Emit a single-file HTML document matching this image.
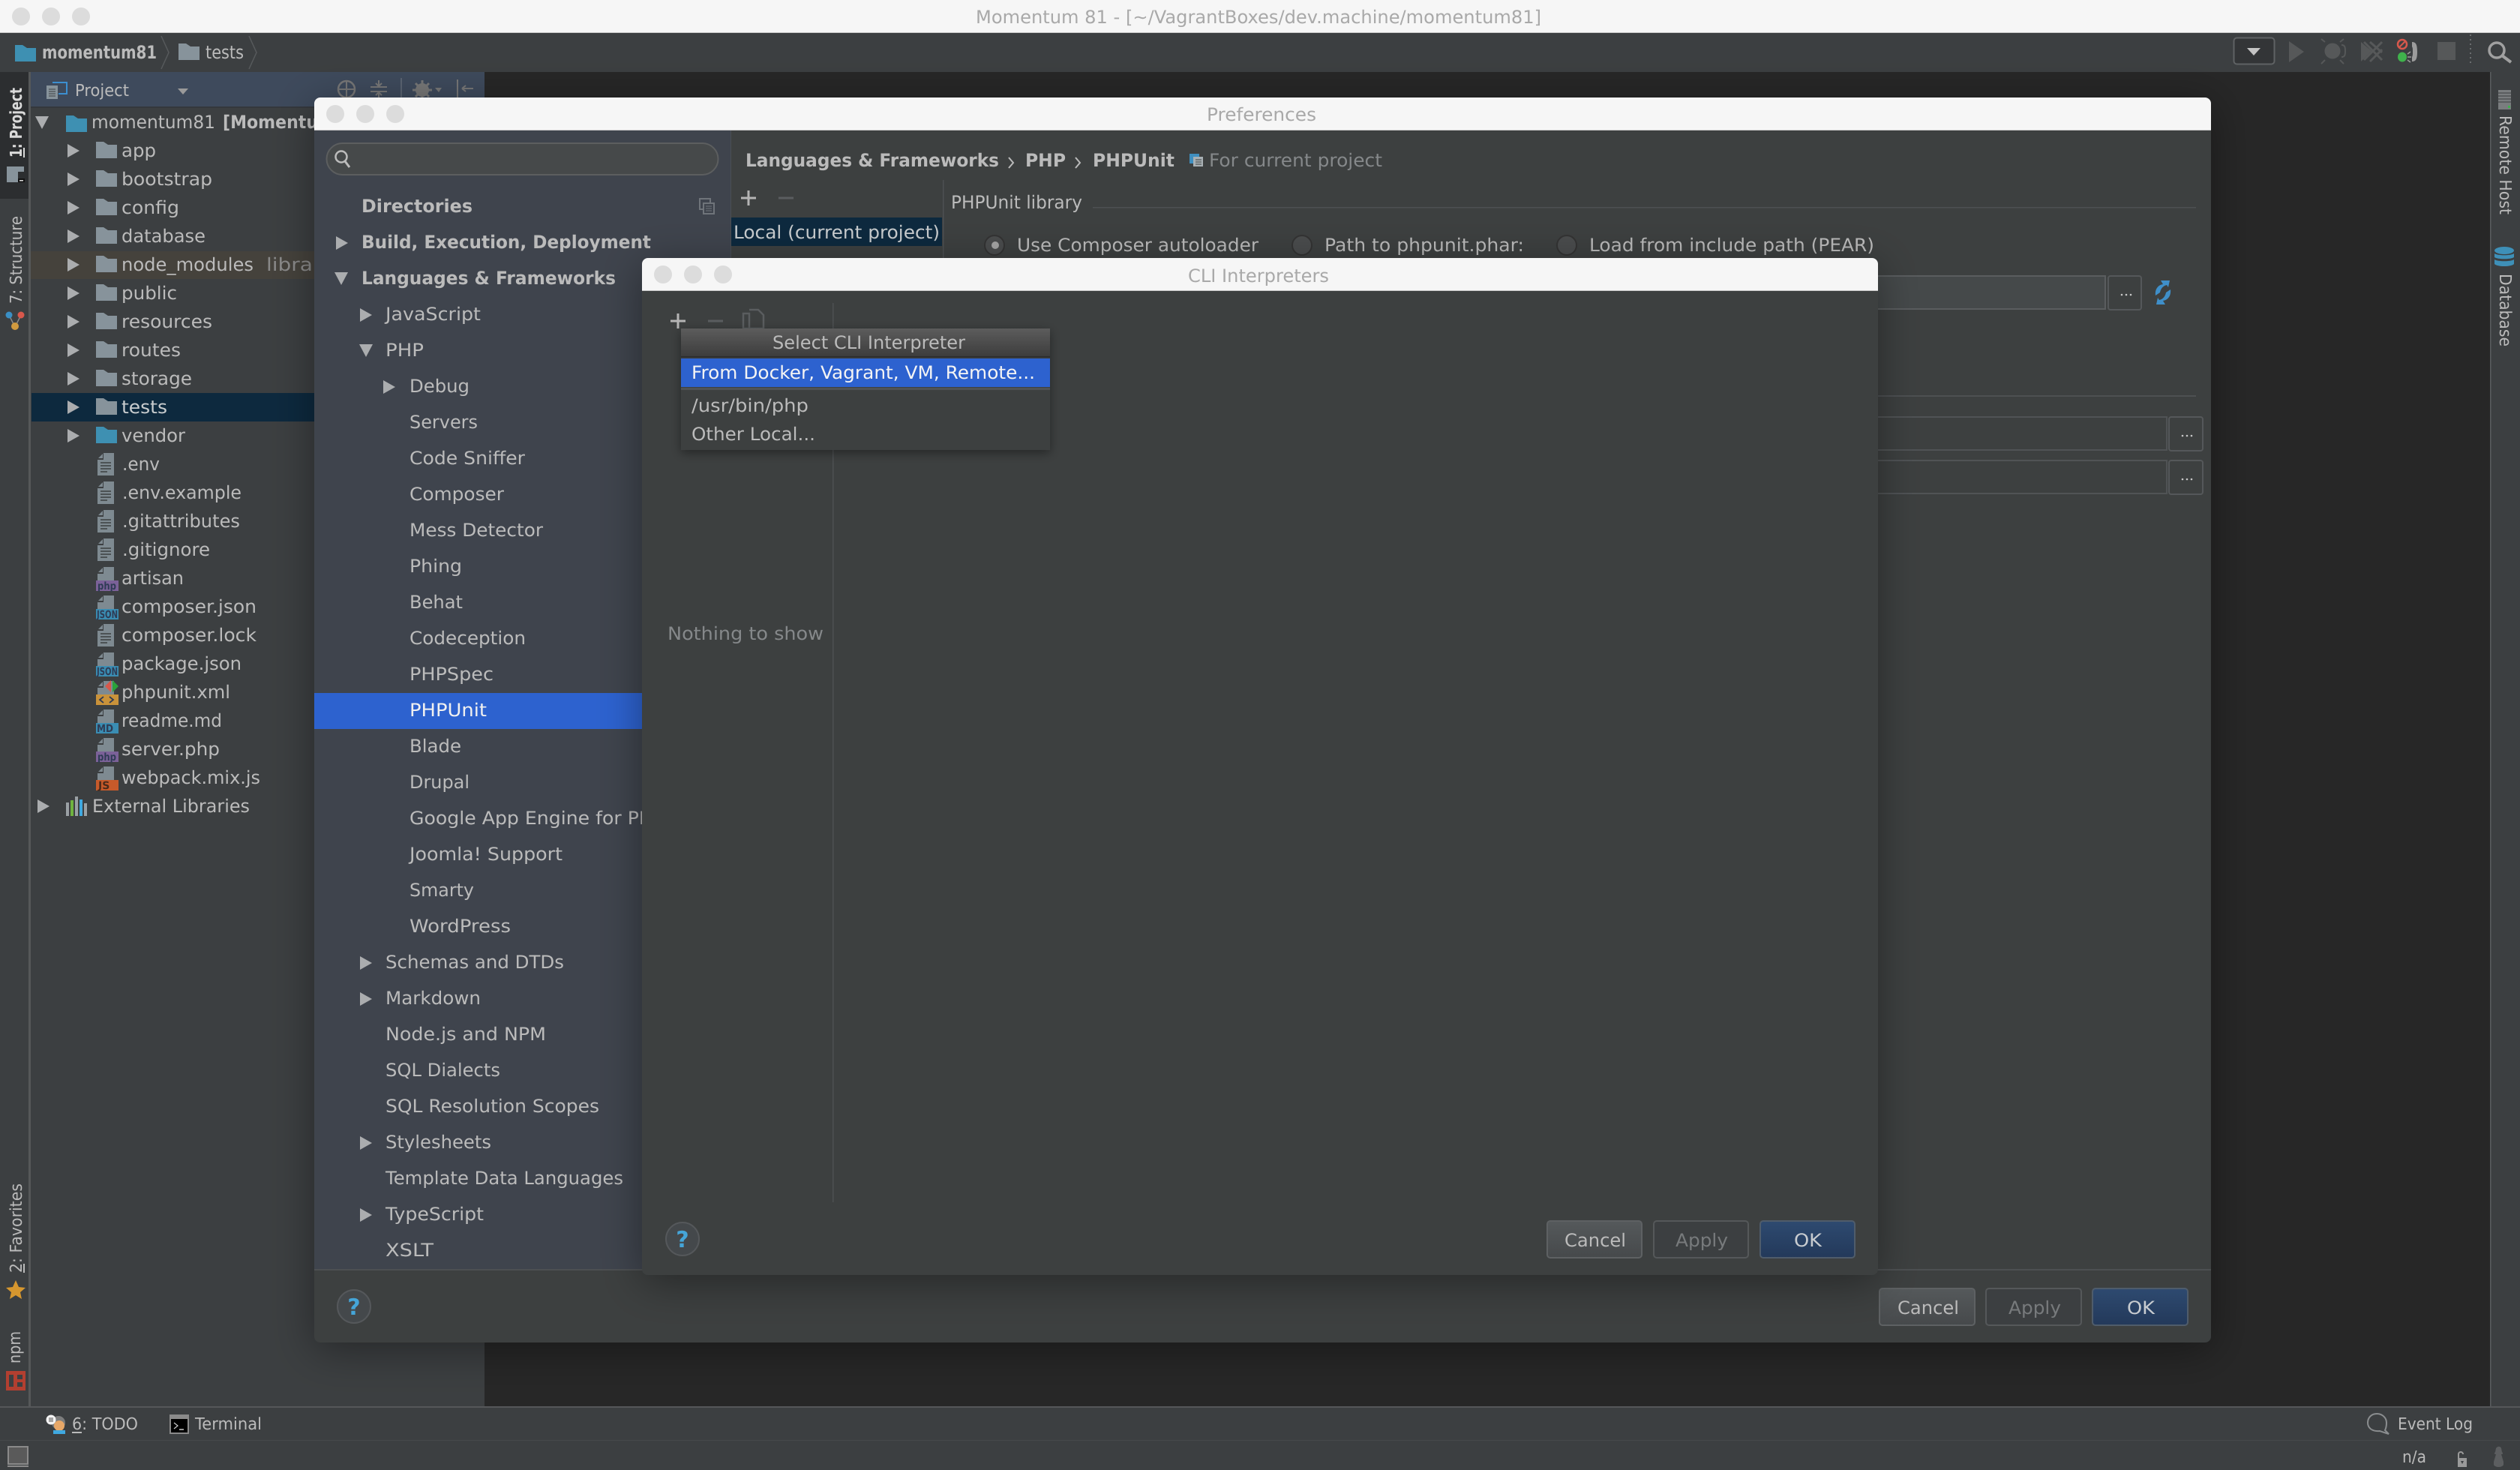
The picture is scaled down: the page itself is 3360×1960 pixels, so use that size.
<!DOCTYPE html>
<html lang="en"><head><meta charset="utf-8"><title>Momentum 81</title>
<style>
html,body{margin:0;padding:0;background:#272727;width:3360px;height:1960px;overflow:hidden}
svg{display:block}
text{font-family:"DejaVu Sans","Liberation Sans",sans-serif;font-size:24px;fill:#bbbbbb;text-rendering:geometricPrecision;white-space:pre}
.b{font-weight:bold}
.s{font-size:22px}
.bd{font-size:14px;fill:#2f3c55;font-weight:bold}
.tt{fill:#a9a9a9}
</style></head><body>
<svg xmlns="http://www.w3.org/2000/svg" width="3360" height="1960" viewBox="0 0 3360 1960">
<defs>
<filter id="sh" filterUnits="userSpaceOnUse" x="200" y="0" width="3160" height="1960"><feDropShadow dx="0" dy="10" stdDeviation="28" flood-color="#000" flood-opacity=".38"/></filter>
<filter id="sm" filterUnits="userSpaceOnUse" x="800" y="380" width="700" height="300"><feDropShadow dx="0" dy="4" stdDeviation="7" flood-color="#000" flood-opacity=".4"/></filter>
<linearGradient id="hd" x1="0" y1="0" x2="0" y2="1"><stop offset="0" stop-color="#5c5c5c"/><stop offset="1" stop-color="#3d3d3d"/></linearGradient>
<linearGradient id="cb" x1="0" y1="0" x2="0" y2="1"><stop offset="0" stop-color="#55595b"/><stop offset="1" stop-color="#46494b"/></linearGradient>
<linearGradient id="okb" x1="0" y1="0" x2="0" y2="1"><stop offset="0" stop-color="#2e4a70"/><stop offset="1" stop-color="#23395a"/></linearGradient>
<g id="fo"><path d="M0 0h10l6 4h12v18H0z" fill="#87939b"/></g>
<g id="fb"><path d="M0 0h10l6 4h12v18H0z" fill="#3e90b2"/></g>
<g id="fi"><path d="M8 0h14v30H0V9h8z" fill="#7e8a91"/><path d="M1 7l6-6v6z" fill="#7e8a91"/><path d="M4 13h14M4 17h14M4 21h14M4 25h9" stroke="#3c3f41" stroke-width="1.6"/></g>
<g id="ft"><path d="M8 0h14v18H0V9h8z" fill="#7e8a91"/><path d="M1 7l6-6v6z" fill="#7e8a91"/></g>
<polygon id="ar" points="0,0 16,9 0,18" fill="#abadaf"/>
<polygon id="ad" points="0,0 18,0 9,17" fill="#abadaf"/>
<g id="tl"><circle cx="0" cy="0" r="12" fill="#dcdcdc"/><circle cx="40" cy="0" r="12" fill="#dcdcdc"/><circle cx="80" cy="0" r="12" fill="#dcdcdc"/></g>
<g id="dots"><circle cx="-6" cy="0" r="1.3" fill="#c8c8c8"/><circle cx="0" cy="0" r="1.3" fill="#c8c8c8"/><circle cx="6" cy="0" r="1.3" fill="#c8c8c8"/></g>
</defs>

<!-- background -->
<rect width="3360" height="1960" fill="#272727"/>

<!-- window title bar -->
<rect width="3360" height="43" fill="#f6f6f6"/><rect y="43" width="3360" height="1" fill="#c8c8c8"/>
<use href="#tl" x="28" y="22"/>
<text class="tt" x="1301" y="31" textLength="754" lengthAdjust="spacingAndGlyphs">Momentum 81 - [~/VagrantBoxes/dev.machine/momentum81]</text>

<!-- navigation bar -->
<rect y="44" width="3360" height="52" fill="#3c3f41"/>
<use href="#fb" x="20" y="60"/>
<text class="b" x="56" y="78" textLength="153" lengthAdjust="spacingAndGlyphs">momentum81</text>
<path d="M215 48l10 22-10 22" fill="none" stroke="#575a5c" stroke-width="1.5"/>
<use href="#fo" x="238" y="58"/>
<text x="274" y="78" textLength="51" lengthAdjust="spacingAndGlyphs">tests</text>
<path d="M332 48l10 22-10 22" fill="none" stroke="#575a5c" stroke-width="1.5"/>
<!-- toolbar -->
<rect x="2978.500" y="50.500" width="54" height="35" rx="4" fill="#333537" stroke="#5f6264" stroke-width="2"/>
<polygon points="2996,64 3014,64 3005,74" fill="#c4c4c4"/>
<polygon points="3052,55 3072,69 3052,83" fill="#565859"/>
<g fill="#565859" stroke="#565859"><ellipse cx="3110" cy="68" rx="10" ry="10"/><path d="M3100 56l-5-4M3120 56l5-4M3122 60c4 0 5 2 5 8s-1 8-5 8M3100 80l-5 5M3120 80l5 5" fill="none" stroke-width="2"/></g>
<g><polygon points="3148,56 3162,68 3148,82" fill="#565859"/><path d="M3152 56l24 24M3160 56l16 14M3152 80l24-24M3160 82l16-16" stroke="#565859" stroke-width="3"/></g>
<circle cx="3203" cy="59" r="6" fill="none" stroke="#d8584c" stroke-width="2.500"/><path d="M3199 63l8-8" stroke="#d8584c" stroke-width="2"/>
<ellipse cx="3203" cy="76" rx="6" ry="6.500" fill="#3fb24c"/><path d="M3210 72l4-3M3210 76h5M3210 80l4 3" stroke="#9a9a9a" stroke-width="1.500"/>
<path d="M3216 56c5 0 7 3 7 13s-2 13-7 13v-6c1-2 1-3 1-7s0-5-1-7z" fill="#9c9c9c"/>
<rect x="3250" y="56" width="24" height="24" fill="#565859"/>
<path d="M3294 46v40" stroke="#6a6d6f" stroke-width="2" stroke-dasharray="2 4"/>
<circle cx="3329" cy="67" r="10" fill="none" stroke="#a0a0a0" stroke-width="3.500"/><path d="M3336 74l12 9" stroke="#a0a0a0" stroke-width="4"/>

<!-- left tool strip -->
<rect y="96" width="38" height="1780" fill="#3c3f41"/>
<rect y="96" width="38" height="169" fill="#2c2e30"/>
<rect x="38" y="96" width="3" height="1780" fill="#565859"/>
<g transform="translate(29,210) rotate(-90)"><text class="s b" style="fill:#dadada" textLength="93" lengthAdjust="spacingAndGlyphs">1: Project</text></g>
<rect x="31" y="197" width="2" height="13" fill="#dadada"/>
<path d="M9 222h23v7H24v14H9z" fill="#87939b"/><rect x="24" y="238" width="9" height="5" fill="#111"/><rect x="26" y="240" width="5" height="1.500" fill="#ddd"/>
<g transform="translate(29,405) rotate(-90)"><text class="s" textLength="117" lengthAdjust="spacingAndGlyphs">7: Structure</text></g>
<path d="M12 420l8 16 8-16" fill="none" stroke="#8a8a8a" stroke-width="1.500"/><circle cx="12" cy="420" r="4.500" fill="#3a8fc4"/><circle cx="28" cy="420" r="4.500" fill="#d8584c"/><circle cx="20" cy="435" r="5" fill="#d19a3f"/>
<g transform="translate(29,1697) rotate(-90)"><text class="s" textLength="119" lengthAdjust="spacingAndGlyphs">2: Favorites</text></g>
<rect x="31" y="1685" width="2" height="12" fill="#bbb"/>
<polygon points="21,1707 25,1716 34,1717 27,1723 29,1732 21,1727 13,1732 15,1723 8,1717 17,1716" fill="#d6972f"/>
<g transform="translate(27,1818) rotate(-90)"><text class="s" textLength="43" lengthAdjust="spacingAndGlyphs">npm</text></g>
<rect x="8" y="1828" width="26" height="26" fill="#b23f30"/><rect x="12" y="1833" width="18" height="16" fill="#3c3f41"/><rect x="18" y="1833" width="5" height="16" fill="#b23f30"/><rect x="18" y="1839" width="12" height="4" fill="#b23f30"/>

<!-- project panel -->
<rect x="41" y="96" width="605" height="1780" fill="#3c3f41"/>
<rect x="41" y="96" width="605" height="46" fill="#3e4a5c"/><rect x="41" y="142" width="605" height="2" fill="#34383d"/>
<rect x="62" y="114" width="15" height="18" fill="#87939b"/><path d="M65 119h9M65 122h9M65 125h9M65 128h9" stroke="#3c3f41" stroke-width="1"/><path d="M70 110h19v15H78" fill="none" stroke="#3c8fd0" stroke-width="2"/>
<text class="s" x="100" y="128" textLength="72" lengthAdjust="spacingAndGlyphs">Project</text>
<polygon points="237,118 251,118 244,126" fill="#9a9a9a"/>
<circle cx="462" cy="119" r="11" fill="none" stroke="#777" stroke-width="2.500"/><path d="M462 108v22M451 119h22" stroke="#777" stroke-width="2"/>
<path d="M494 116h22M494 122h22M505 107v7M505 131v-7M501 111l4 4 4-4M501 127l4-4 4 4" fill="none" stroke="#777" stroke-width="2"/>
<rect x="534" y="104" width="2" height="28" fill="#5a6472"/>
<circle cx="563" cy="120" r="9" fill="#777"/><circle cx="563" cy="120" r="3.500" fill="#3e4a5c"/><path d="M563 107v26M550 120h26M554 111l18 18M572 111l-18 18" stroke="#777" stroke-width="3"/><polygon points="580,117 589,117 585,123" fill="#777"/>
<path d="M610 106v26M616 118h15M616 118l5-4M616 118l5 4" fill="none" stroke="#777" stroke-width="2"/>

<rect x="41" y="335" width="605" height="37" fill="#45423c"/>
<rect x="42" y="524" width="604" height="38" fill="#0d293e"/>

<use href="#ad" x="47" y="155"/>
<use href="#fb" x="88" y="154"/>
<text x="122" y="171" textLength="165" lengthAdjust="spacingAndGlyphs">momentum81</text>
<text class="b" x="297" y="171" textLength="150" lengthAdjust="spacingAndGlyphs">[Momentum</text>

<use href="#ar" x="90" y="192"/><use href="#fo" x="128" y="189"/><text x="162" y="209" textLength="46" lengthAdjust="spacingAndGlyphs">app</text>
<use href="#ar" x="90" y="230"/><use href="#fo" x="128" y="227"/><text x="162" y="247" textLength="121" lengthAdjust="spacingAndGlyphs">bootstrap</text>
<use href="#ar" x="90" y="268"/><use href="#fo" x="128" y="265"/><text x="162" y="285" textLength="77" lengthAdjust="spacingAndGlyphs">config</text>
<use href="#ar" x="90" y="306"/><use href="#fo" x="128" y="303"/><text x="162" y="323" textLength="112" lengthAdjust="spacingAndGlyphs">database</text>
<use href="#ar" x="90" y="344"/><use href="#fo" x="128" y="341"/><text x="162" y="361" textLength="176" lengthAdjust="spacingAndGlyphs">node_modules</text><text x="355" y="361" textLength="90" lengthAdjust="spacingAndGlyphs" style="fill:#8a8a8a">library</text>
<use href="#ar" x="90" y="382"/><use href="#fo" x="128" y="379"/><text x="162" y="399" textLength="74" lengthAdjust="spacingAndGlyphs">public</text>
<use href="#ar" x="90" y="420"/><use href="#fo" x="128" y="417"/><text x="162" y="437" textLength="121" lengthAdjust="spacingAndGlyphs">resources</text>
<use href="#ar" x="90" y="458"/><use href="#fo" x="128" y="455"/><text x="162" y="475" textLength="79" lengthAdjust="spacingAndGlyphs">routes</text>
<use href="#ar" x="90" y="496"/><use href="#fo" x="128" y="493"/><text x="162" y="513" textLength="94" lengthAdjust="spacingAndGlyphs">storage</text>
<use href="#ar" x="90" y="534"/><use href="#fo" x="128" y="531"/><text x="162" y="551" textLength="61" lengthAdjust="spacingAndGlyphs" style="fill:#c8ccce">tests</text>
<use href="#ar" x="90" y="572"/><use href="#fb" x="128" y="569"/><text x="162" y="589" textLength="85" lengthAdjust="spacingAndGlyphs">vendor</text>
<use href="#fi" x="130" y="604"/><text x="163" y="627" textLength="50" lengthAdjust="spacingAndGlyphs">.env</text>
<use href="#fi" x="130" y="642"/><text x="163" y="665" textLength="159" lengthAdjust="spacingAndGlyphs">.env.example</text>
<use href="#fi" x="130" y="680"/><text x="163" y="703" textLength="157" lengthAdjust="spacingAndGlyphs">.gitattributes</text>
<use href="#fi" x="130" y="718"/><text x="163" y="741" textLength="117" lengthAdjust="spacingAndGlyphs">.gitignore</text>
<use href="#ft" x="130" y="756"/><rect x="128" y="774" width="30" height="14" fill="#7b6198"/><text class="bd" x="130" y="786" textLength="25" lengthAdjust="spacingAndGlyphs">php</text><text x="162" y="779" textLength="83" lengthAdjust="spacingAndGlyphs">artisan</text>
<use href="#ft" x="130" y="794"/><rect x="128" y="812" width="30" height="14" fill="#3a8db3"/><text class="bd" x="129" y="824" textLength="28" lengthAdjust="spacingAndGlyphs">JSON</text><text x="162" y="817" textLength="180" lengthAdjust="spacingAndGlyphs">composer.json</text>
<use href="#fi" x="130" y="832"/><text x="162" y="855" textLength="180" lengthAdjust="spacingAndGlyphs">composer.lock</text>
<use href="#ft" x="130" y="870"/><rect x="128" y="888" width="30" height="14" fill="#3a8db3"/><text class="bd" x="129" y="900" textLength="28" lengthAdjust="spacingAndGlyphs">JSON</text><text x="162" y="893" textLength="160" lengthAdjust="spacingAndGlyphs">package.json</text>
<use href="#ft" x="130" y="908"/><rect x="128" y="926" width="30" height="14" fill="#c9923a"/><path d="M138 929l-5 4 5 4M146 929l5 4-5 4" fill="none" stroke="#2f3c55" stroke-width="1.800"/><polygon points="148,907 148,923 140,915" fill="#d8584c"/><polygon points="150,907 150,923 158,915" fill="#2aa33a"/><text x="162" y="931" textLength="145" lengthAdjust="spacingAndGlyphs">phpunit.xml</text>
<use href="#ft" x="130" y="946"/><rect x="128" y="964" width="30" height="14" fill="#3a8db3"/><text class="bd" x="129" y="976" textLength="22" lengthAdjust="spacingAndGlyphs">MD</text><text x="162" y="969" textLength="134" lengthAdjust="spacingAndGlyphs">readme.md</text>
<use href="#ft" x="130" y="984"/><rect x="128" y="1002" width="30" height="14" fill="#7b6198"/><text class="bd" x="130" y="1014" textLength="25" lengthAdjust="spacingAndGlyphs">php</text><text x="162" y="1007" textLength="131" lengthAdjust="spacingAndGlyphs">server.php</text>
<use href="#ft" x="130" y="1022"/><rect x="128" y="1040" width="30" height="14" fill="#c75a2a"/><text class="bd" x="131" y="1052" style="fill:#4a2a1a">JS</text><text x="162" y="1045" textLength="185" lengthAdjust="spacingAndGlyphs">webpack.mix.js</text>
<use href="#ar" x="50" y="1066"/>
<g><rect x="88" y="1070" width="4" height="18" fill="#9aa0a4"/><rect x="94" y="1067" width="4" height="21" fill="#6fb33f"/><rect x="100" y="1062" width="4" height="26" fill="#9aa0a4"/><rect x="106" y="1066" width="4" height="22" fill="#3fa8e0"/><rect x="112" y="1071" width="4" height="17" fill="#9aa0a4"/></g>
<text x="123" y="1083" textLength="210" lengthAdjust="spacingAndGlyphs">External Libraries</text>

<!-- right tool strip -->
<rect x="3320" y="96" width="40" height="1780" fill="#3c3f41"/><rect x="3320" y="96" width="1.500" height="1780" fill="#5a5d5f"/>
<rect x="3331" y="120" width="17" height="26" fill="#7a7d7f"/><path d="M3331 124h17M3331 128h17M3331 132h17M3331 136h17" stroke="#3c3f41" stroke-width="1"/><rect x="3344" y="141" width="3" height="3" fill="#3fb24c"/>
<g transform="translate(3333,154) rotate(90)"><text class="s" textLength="132" lengthAdjust="spacingAndGlyphs">Remote Host</text></g>
<ellipse cx="3339" cy="334" rx="13" ry="5" fill="#3e90b8"/><path d="M3326 338c4 3 22 3 26 0v5c-4 3-22 3-26 0zM3326 346c4 3 22 3 26 0v6c-4 4-22 4-26 0z" fill="#3e90b8"/>
<g transform="translate(3333,365) rotate(90)"><text class="s" textLength="97" lengthAdjust="spacingAndGlyphs">Database</text></g>

<!-- bottom bars -->
<rect y="1876" width="3360" height="44" fill="#3c3f41"/><rect y="1875" width="3360" height="2" fill="#555759"/>
<rect y="1920" width="3360" height="40" fill="#3c3f41"/><rect y="1920" width="3360" height="1" fill="#45484a"/>
<circle cx="78" cy="1897" r="9" fill="#7d7d7d"/><circle cx="79" cy="1901" r="7" fill="#e8a868"/><rect x="71" y="1907" width="16" height="5" fill="#3fa8e0"/><circle cx="68" cy="1893" r="6.500" fill="#f4f4f4"/><path d="M65 1891h6M65 1893h6M65 1895h6" stroke="#555" stroke-width="1"/>
<text class="s" x="96" y="1906" textLength="88" lengthAdjust="spacingAndGlyphs">6: TODO</text><rect x="96" y="1909" width="13" height="2" fill="#bbb"/>
<rect x="226" y="1886" width="26" height="26" fill="#8a8a8a"/><rect x="228" y="1892" width="22" height="18" fill="#000"/><path d="M232 1897l5 4-5 4" fill="none" stroke="#ccc" stroke-width="1.200"/><path d="M239 1906h6" stroke="#ccc" stroke-width="1.500"/>
<text class="s" x="260" y="1906" textLength="89" lengthAdjust="spacingAndGlyphs">Terminal</text>
<rect x="11" y="1929" width="26" height="23" fill="#5a5a5a" stroke="#8a8a8a" stroke-width="2"/><rect x="10" y="1954" width="28" height="2" fill="#8a8a8a"/>
<path d="M3173 1908c-10 1-16-4-16-11s5-12 12-12 13 5 13 12c0 5-1 8-2 10l5 5z" fill="none" stroke="#8a8d8f" stroke-width="2"/>
<text class="s" x="3197" y="1906" textLength="100" lengthAdjust="spacingAndGlyphs">Event Log</text>
<text class="s" x="3203" y="1950" textLength="32" lengthAdjust="spacingAndGlyphs">n/a</text>
<rect x="3277" y="1944" width="12" height="12" fill="#9a9a9a"/><path d="M3278 1944v-5c0-4 6-4 6 0" fill="none" stroke="#9a9a9a" stroke-width="2"/><polygon points="3281,1948 3285,1948 3283,1952" fill="#3c3f41"/>
<path d="M3325 1949l3-10c-2 0-3-1-1-3l1-5c2-3 6-3 7 0l1 5c2 2 1 3-1 3l3 10v4c-2 4-11 4-13 0z" fill="#5c5e60"/>

<!-- Preferences dialog -->
<rect x="419" y="130" width="2529" height="1660" rx="8" fill="#3c3f41" filter="url(#sh)"/>
<path d="M419 173V138a8 8 0 0 1 8-8H2940a8 8 0 0 1 8 8V173z" fill="#f6f6f6"/><rect x="419" y="173" width="2529" height="1" fill="#c8c8c8"/>
<use href="#tl" x="447" y="152"/>
<text class="tt" x="1609" y="161" textLength="146" lengthAdjust="spacingAndGlyphs">Preferences</text>
<!-- sidebar -->
<rect x="419" y="174" width="555" height="1519" fill="#3f444d"/>
<rect x="974" y="174" width="1" height="1519" fill="#4a4e54"/>
<rect x="435.500" y="191" width="522" height="42" rx="21" fill="#46494a" stroke="#5c5e5f" stroke-width="2"/>
<circle cx="455" cy="209" r="7.500" fill="none" stroke="#bcbcbc" stroke-width="2.500"/><path d="M460 215l6 8" stroke="#bcbcbc" stroke-width="3"/>
<rect x="933" y="265" width="14" height="14" fill="none" stroke="#6f747a" stroke-width="2"/><rect x="938" y="271" width="14" height="14" fill="#3f444d" stroke="#6f747a" stroke-width="2"/><path d="M941 275h8M941 278h8M941 281h8" stroke="#6f747a"/>
<rect x="419" y="924" width="438" height="48" fill="#2d62cf"/>
<text class="b" x="482" y="283" textLength="148" lengthAdjust="spacingAndGlyphs">Directories</text>
<use href="#ar" x="448" y="315"/><text class="b" x="482" y="331" textLength="386" lengthAdjust="spacingAndGlyphs">Build, Execution, Deployment</text>
<use href="#ad" x="446" y="363"/><text class="b" x="482" y="379" textLength="339" lengthAdjust="spacingAndGlyphs">Languages &amp; Frameworks</text>
<use href="#ar" x="480" y="411"/><text x="514" y="427" textLength="127" lengthAdjust="spacingAndGlyphs">JavaScript</text>
<use href="#ad" x="479" y="459"/><text x="514" y="475" textLength="51" lengthAdjust="spacingAndGlyphs">PHP</text>
<use href="#ar" x="511" y="507"/><text x="546" y="523" textLength="80" lengthAdjust="spacingAndGlyphs">Debug</text>
<text x="546" y="571" textLength="91" lengthAdjust="spacingAndGlyphs">Servers</text>
<text x="546" y="619" textLength="154" lengthAdjust="spacingAndGlyphs">Code Sniffer</text>
<text x="546" y="667" textLength="126" lengthAdjust="spacingAndGlyphs">Composer</text>
<text x="546" y="715" textLength="178" lengthAdjust="spacingAndGlyphs">Mess Detector</text>
<text x="546" y="763" textLength="70" lengthAdjust="spacingAndGlyphs">Phing</text>
<text x="546" y="811" textLength="71" lengthAdjust="spacingAndGlyphs">Behat</text>
<text x="546" y="859" textLength="155" lengthAdjust="spacingAndGlyphs">Codeception</text>
<text x="546" y="907" textLength="112" lengthAdjust="spacingAndGlyphs">PHPSpec</text>
<text x="546" y="955" textLength="103" lengthAdjust="spacingAndGlyphs" style="fill:#f0f0f0">PHPUnit</text>
<text x="546" y="1003" textLength="69" lengthAdjust="spacingAndGlyphs">Blade</text>
<text x="546" y="1051" textLength="80" lengthAdjust="spacingAndGlyphs">Drupal</text>
<text x="546" y="1099" textLength="340" lengthAdjust="spacingAndGlyphs">Google App Engine for PHP</text>
<text x="546" y="1147" textLength="204" lengthAdjust="spacingAndGlyphs">Joomla! Support</text>
<text x="546" y="1195" textLength="86" lengthAdjust="spacingAndGlyphs">Smarty</text>
<text x="546" y="1243" textLength="135" lengthAdjust="spacingAndGlyphs">WordPress</text>
<use href="#ar" x="480" y="1275"/><text x="514" y="1291" textLength="238" lengthAdjust="spacingAndGlyphs">Schemas and DTDs</text>
<use href="#ar" x="480" y="1323"/><text x="514" y="1339" textLength="127" lengthAdjust="spacingAndGlyphs">Markdown</text>
<text x="514" y="1387" textLength="214" lengthAdjust="spacingAndGlyphs">Node.js and NPM</text>
<text x="514" y="1435" textLength="153" lengthAdjust="spacingAndGlyphs">SQL Dialects</text>
<text x="514" y="1483" textLength="285" lengthAdjust="spacingAndGlyphs">SQL Resolution Scopes</text>
<use href="#ar" x="480" y="1515"/><text x="514" y="1531" textLength="141" lengthAdjust="spacingAndGlyphs">Stylesheets</text>
<text x="514" y="1579" textLength="317" lengthAdjust="spacingAndGlyphs">Template Data Languages</text>
<use href="#ar" x="480" y="1611"/><text x="514" y="1627" textLength="131" lengthAdjust="spacingAndGlyphs">TypeScript</text>
<text x="514" y="1675" textLength="64" lengthAdjust="spacingAndGlyphs">XSLT</text>
<!-- right pane -->
<text class="b" x="994" y="222" textLength="338" lengthAdjust="spacingAndGlyphs">Languages &amp; Frameworks</text>
<path d="M1345 210l6 7-6 7" fill="none" stroke="#bbb" stroke-width="2"/>
<text class="b" x="1367" y="222" textLength="54" lengthAdjust="spacingAndGlyphs">PHP</text>
<path d="M1434 210l6 7-6 7" fill="none" stroke="#bbb" stroke-width="2"/>
<text class="b" x="1457" y="222" textLength="109" lengthAdjust="spacingAndGlyphs">PHPUnit</text>
<rect x="1586" y="205" width="13" height="13" fill="#3f8fc0"/><rect x="1591" y="209" width="13" height="13" fill="#a8b0b4"/><path d="M1594 213h8M1594 216h8M1594 219h8" stroke="#3c3f41"/>
<text x="1612" y="222" textLength="231" lengthAdjust="spacingAndGlyphs" style="fill:#85888a">For current project</text>
<path d="M988 264h20M998 254v20" stroke="#b5b5b5" stroke-width="3"/>
<path d="M1038 264h20" stroke="#5a5d5f" stroke-width="3"/>
<rect x="975" y="290" width="281" height="38" fill="#0d293e"/>
<text x="978" y="318" textLength="275" lengthAdjust="spacingAndGlyphs" style="fill:#c8ccce">Local (current project)</text>
<rect x="1257" y="240" width="1.500" height="110" fill="#4d5052"/>
<text x="1268" y="278" textLength="175" lengthAdjust="spacingAndGlyphs">PHPUnit library</text>
<rect x="1457" y="276" width="1471" height="1.500" fill="#4d5052"/>
<circle cx="1326" cy="327" r="13" fill="#4a4c4d" stroke="#333" stroke-width="2"/><circle cx="1327" cy="327" r="5" fill="#a5a5a5"/>
<text x="1356" y="335" textLength="322" lengthAdjust="spacingAndGlyphs">Use Composer autoloader</text>
<circle cx="1736" cy="327" r="13" fill="#4a4c4d" stroke="#333" stroke-width="2"/>
<text x="1766" y="335" textLength="266" lengthAdjust="spacingAndGlyphs">Path to phpunit.phar:</text>
<circle cx="2089" cy="327" r="13" fill="#4a4c4d" stroke="#333" stroke-width="2"/>
<text x="2119" y="335" textLength="380" lengthAdjust="spacingAndGlyphs">Load from include path (PEAR)</text>
<rect x="2400" y="368" width="407" height="44" fill="#45494a" stroke="#5a5d5f" stroke-width="2"/>
<rect x="2811" y="368" width="44" height="45" rx="3" fill="none" stroke="#55585a" stroke-width="2"/><use href="#dots" x="2835" y="393"/>
<path d="M2874 394c-1-8 3-14 10-15l-3-5 12 0-2 9-2-3c-5 1-8 5-9 10zM2894 386c1 8-3 14-10 15l3 5-12 0 2-9 2 3c5-1 8-5 9-10z" fill="#3f8fc9"/>
<rect x="2400" y="527" width="528" height="2" fill="#4d5052"/>
<rect x="2400" y="556" width="489" height="44" fill="none" stroke="#505355" stroke-width="2"/>
<rect x="2892" y="556" width="45" height="45" rx="3" fill="none" stroke="#55585a" stroke-width="2"/><use href="#dots" x="2916" y="581"/>
<rect x="2400" y="614" width="489" height="44" fill="none" stroke="#505355" stroke-width="2"/>
<rect x="2892" y="614" width="45" height="45" rx="3" fill="none" stroke="#55585a" stroke-width="2"/><use href="#dots" x="2916" y="639"/>
<!-- footer -->
<rect x="419" y="1692" width="2529" height="2" fill="#4d5052"/>
<circle cx="472" cy="1742" r="22" fill="#44484b" stroke="#55585b" stroke-width="2"/>
<text class="b" x="472" y="1753" text-anchor="middle" style="font-size:30px;fill:#45a5d8">?</text>
<rect x="2506" y="1718" width="127" height="49" rx="4" fill="url(#cb)" stroke="#5e6163" stroke-width="2"/>
<text x="2530" y="1752" textLength="82" lengthAdjust="spacingAndGlyphs">Cancel</text>
<rect x="2648" y="1718" width="127" height="49" rx="4" fill="#3c3f41" stroke="#55585a" stroke-width="2"/>
<text x="2678" y="1752" textLength="70" lengthAdjust="spacingAndGlyphs" style="fill:#777a7c">Apply</text>
<rect x="2790" y="1718" width="127" height="49" rx="4" fill="url(#okb)" stroke="#4f5c6b" stroke-width="2"/>
<text x="2836" y="1752" textLength="37" lengthAdjust="spacingAndGlyphs" style="fill:#c8ccd0">OK</text>

<!-- CLI Interpreters dialog -->
<rect x="856" y="344" width="1648" height="1356" rx="8" fill="#3c3f41" filter="url(#sh)"/>
<path d="M856 387V352a8 8 0 0 1 8-8H2496a8 8 0 0 1 8 8V387z" fill="#f6f6f6"/><rect x="856" y="387" width="1648" height="1" fill="#c8c8c8"/>
<use href="#tl" x="884" y="366"/>
<text class="tt" x="1584" y="376" textLength="188" lengthAdjust="spacingAndGlyphs">CLI Interpreters</text>
<rect x="1110" y="404" width="1.500" height="1199" fill="#4d5052"/>
<path d="M894 428h20M904 418v20" stroke="#b5b5b5" stroke-width="3"/>
<path d="M944 428h20" stroke="#5a5d5f" stroke-width="3"/>
<path d="M991 418h8v20h-8zM999 413h12l7 7v18h-19" fill="none" stroke="#5a5d5f" stroke-width="2.500"/>
<text x="890" y="853" textLength="208" lengthAdjust="spacingAndGlyphs" style="fill:#85888a">Nothing to show</text>
<circle cx="910" cy="1652" r="22" fill="#44484b" stroke="#55585b" stroke-width="2"/>
<text class="b" x="910" y="1663" text-anchor="middle" style="font-size:30px;fill:#45a5d8">?</text>
<rect x="2063" y="1628" width="126" height="49" rx="4" fill="url(#cb)" stroke="#5e6163" stroke-width="2"/>
<text x="2086" y="1662" textLength="82" lengthAdjust="spacingAndGlyphs">Cancel</text>
<rect x="2205" y="1628" width="126" height="49" rx="4" fill="#3c3f41" stroke="#55585a" stroke-width="2"/>
<text x="2234" y="1662" textLength="70" lengthAdjust="spacingAndGlyphs" style="fill:#777a7c">Apply</text>
<rect x="2347" y="1628" width="126" height="49" rx="4" fill="url(#okb)" stroke="#4f5c6b" stroke-width="2"/>
<text x="2392" y="1662" textLength="37" lengthAdjust="spacingAndGlyphs" style="fill:#c8ccd0">OK</text>

<!-- popup -->
<rect x="908" y="438" width="492" height="162" fill="#3c3f41" filter="url(#sm)"/>
<rect x="908" y="438" width="492" height="37" fill="url(#hd)"/><rect x="908" y="475" width="492" height="1.500" fill="#2c2c2c"/>
<text x="1030" y="465" textLength="257" lengthAdjust="spacingAndGlyphs">Select CLI Interpreter</text>
<rect x="908" y="478" width="492" height="38" fill="#2d62cf"/>
<text x="922" y="505" textLength="458" lengthAdjust="spacingAndGlyphs" style="fill:#f4f4f4">From Docker, Vagrant, VM, Remote...</text>
<rect x="908" y="517" width="492" height="3" fill="#505355"/>
<text x="922" y="549" textLength="156" lengthAdjust="spacingAndGlyphs">/usr/bin/php</text>
<text x="922" y="587" textLength="165" lengthAdjust="spacingAndGlyphs">Other Local...</text>
</svg>
</body></html>
